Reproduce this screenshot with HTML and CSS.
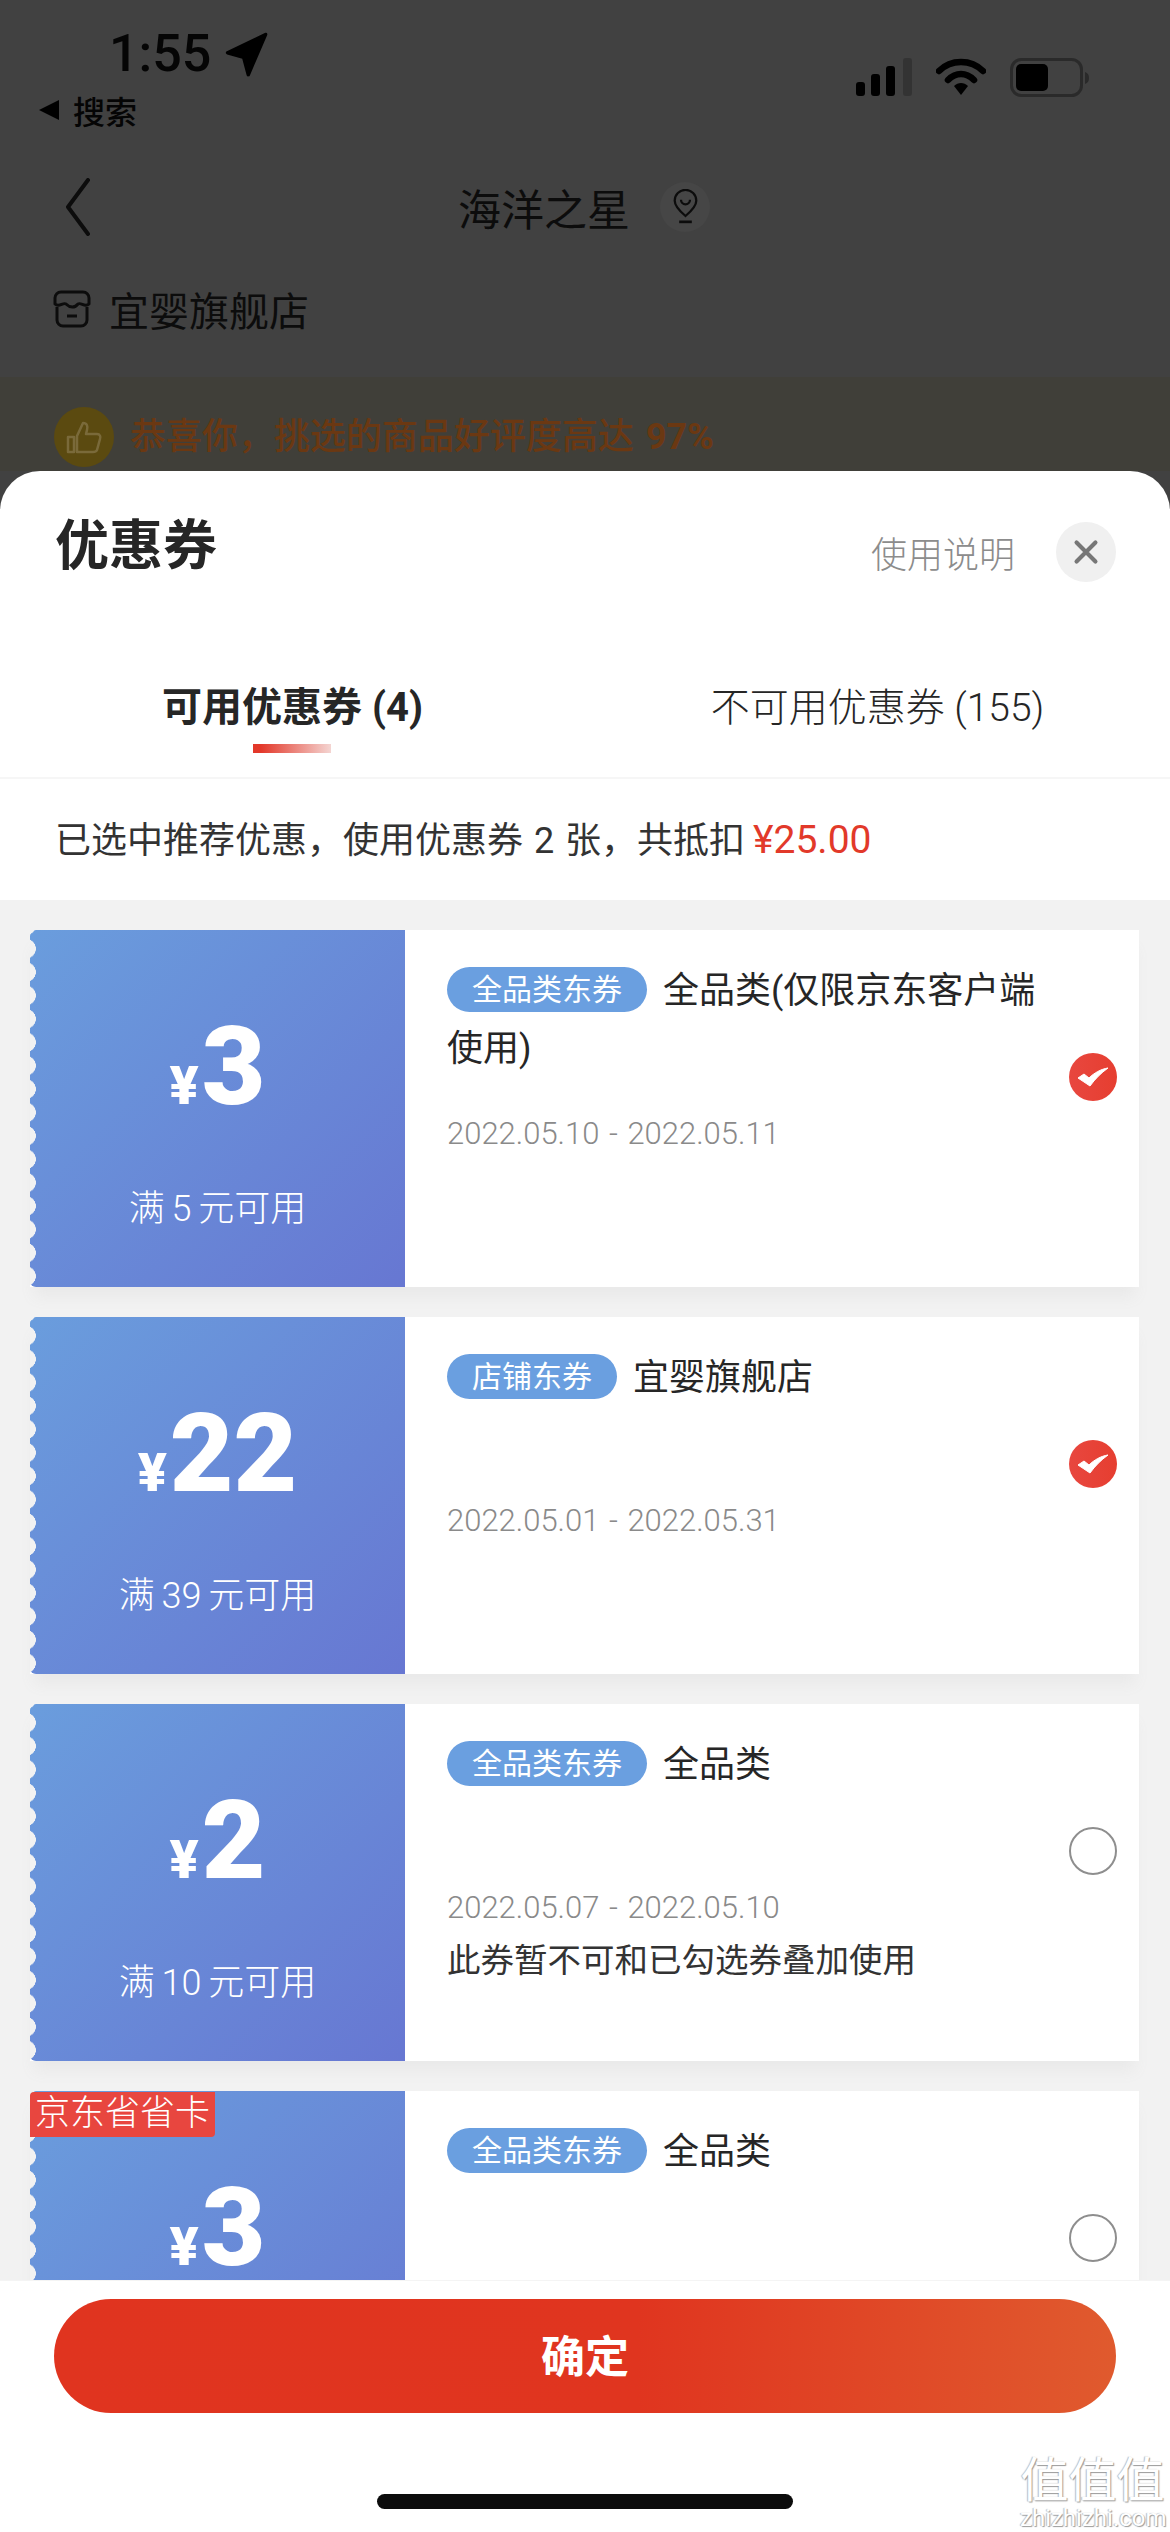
FILE: index.html
```html
<!DOCTYPE html>
<html lang="zh-CN">
<head>
    <meta charset="UTF-8">
    <meta name="viewport" content="width=device-width, initial-scale=1.0">
    <title>优惠券</title>
    <link rel="stylesheet" href="styles.css">
</head>
<body>
<div class="phone">
    <!-- dimmed page behind the sheet -->
    <div class="behind">
        <div class="status">
            <div class="status-left">
                <div class="time-row">
                    <span class="time">1:55</span>
                    <svg class="loc" viewBox="0 0 40 40"><path d="M37 3 L4 19 L18 23 L22 38 Z" fill="#000" stroke="#000" stroke-width="3" stroke-linejoin="round"/></svg>
                </div>
                <div class="back-app">
                    <svg class="back-tri" viewBox="0 0 22 22"><path d="M1 11 L21 1 L21 21 Z" fill="#000"/></svg>
                    <span>搜索</span>
                </div>
            </div>
            <div class="status-right">
                <svg class="signal" viewBox="0 0 58 38">
                    <rect x="0" y="24" width="9" height="14" rx="3" fill="#000"/>
                    <rect x="15" y="16" width="9" height="22" rx="3" fill="#000"/>
                    <rect x="30" y="8" width="9" height="30" rx="3" fill="#000"/>
                    <rect x="47" y="0" width="9" height="38" rx="3" fill="#333"/>
                </svg>
                <svg class="wifi" viewBox="0 0 50 38">
                    <path d="M3 13 C15 1 35 1 47 13" fill="none" stroke="#000" stroke-width="6.5" stroke-linecap="round"/>
                    <path d="M12 22 C20 14 30 14 38 22" fill="none" stroke="#000" stroke-width="6.5" stroke-linecap="round"/>
                    <path d="M18 28 C22 24 28 24 32 28 L25 37 Z" fill="#000"/>
                </svg>
                <svg class="battery" viewBox="0 0 80 40">
                    <rect x="1.5" y="1.5" width="70" height="36" rx="10" fill="none" stroke="#2a2a2a" stroke-width="3"/>
                    <rect x="6" y="6" width="32" height="27" rx="5" fill="#000"/>
                    <path d="M75 14 C78 15 79 17 79 20 C79 23 78 25 75 26 Z" fill="#2a2a2a"/>
                </svg>
            </div>
        </div>

        <div class="nav">
            <svg class="chevron" viewBox="0 0 26 58"><path d="M23 2 L3 29 L23 56" fill="none" stroke="#0c0c0c" stroke-width="4" stroke-linecap="round" stroke-linejoin="round"/></svg>
            <div class="nav-title">
                <span>海洋之星</span>
                <span class="pin-wrap">
                    <svg class="pin" viewBox="0 0 30 40">
                        <path d="M15 30 C8 24 3 19 3 13 A12 12 0 0 1 27 13 C27 19 22 24 15 30 Z" fill="none" stroke="#0c0c0c" stroke-width="2.5"/>
                        <path d="M10 12 A5 5 0 0 0 20 12" fill="none" stroke="#0c0c0c" stroke-width="2.5"/>
                        <rect x="8" y="35" width="14" height="3" fill="#0c0c0c"/>
                    </svg>
                </span>
            </div>
        </div>

        <div class="shop">
            <svg class="shop-icon" viewBox="0 0 38 38">
                <path d="M8 2 H30 A6 6 0 0 1 36 8 V14 C32 18 28 12 25 14 C22 18 17 18 13 14 C10 12 6 18 2 14 V8 A6 6 0 0 1 8 2 Z" fill="none" stroke="#0c0c0c" stroke-width="3" stroke-linejoin="round"/>
                <path d="M4 17 V30 A6 6 0 0 0 10 36 H28 A6 6 0 0 0 34 30 V17" fill="none" stroke="#0c0c0c" stroke-width="3"/>
                <path d="M14 26 H24" stroke="#0c0c0c" stroke-width="3"/>
            </svg>
            <span>宜婴旗舰店</span>
        </div>

        <div class="banner">
            <span class="thumb">
                <svg viewBox="0 0 40 40"><path d="M4 20 H10 V35 H4 Z M13 19 L19 6 C23 6 24 9 23 13 L22 17 H33 C36 17 37 20 36 22 L33 33 C32 35 31 35 29 35 H13 Z" fill="none" stroke="#7a6a3a" stroke-width="2.5" stroke-linejoin="round"/></svg>
            </span>
            <span class="banner-text">恭喜你，挑选的商品好评度高达 <b>97%</b></span>
        </div>
    </div>

    <div class="sheet">
        <div class="sheet-head">
            <h1>优惠券</h1>
            <div class="head-right">
                <span class="help">使用说明</span>
                <span class="close">
                    <svg viewBox="0 0 22 22"><path d="M3 3 L19 19 M19 3 L3 19" stroke="#777" stroke-width="3.5" stroke-linecap="round"/></svg>
                </span>
            </div>
        </div>

        <div class="tabs">
            <div class="tab active">可用优惠券 (4)<i class="tab-line"></i></div>
            <div class="tab">不可用优惠券 (155)</div>
        </div>

        <div class="summary">已选中推荐优惠，使用优惠券 2 张，共抵扣 <span class="red">¥25.00</span></div>

        <div class="list">
            <div class="card">
                <div class="coupon">
                    <div class="amount"><span class="yen">¥</span><span class="num">3</span></div>
                    <div class="cond">满 5 元可用</div>
                </div>
                <div class="info">
                    <div class="title"><span class="tag">全品类东券</span>全品类(仅限京东客户端使用)</div>
                    <div class="date">2022.05.10 - 2022.05.11</div>
                </div>
                <span class="check on"><svg viewBox="0 0 48 48"><path d="M9 25 L15 21 L20 25 C25 20 32 16 39 15 C32 20 26 26 21 33 Z" fill="#fff" stroke="#fff" stroke-width="1" stroke-linejoin="round"/></svg></span>
            </div>

            <div class="card">
                <div class="coupon">
                    <div class="amount"><span class="yen">¥</span><span class="num">22</span></div>
                    <div class="cond">满 39 元可用</div>
                </div>
                <div class="info">
                    <div class="title"><span class="tag">店铺东券</span>宜婴旗舰店</div>
                    <div class="date">2022.05.01 - 2022.05.31</div>
                </div>
                <span class="check on"><svg viewBox="0 0 48 48"><path d="M9 25 L15 21 L20 25 C25 20 32 16 39 15 C32 20 26 26 21 33 Z" fill="#fff" stroke="#fff" stroke-width="1" stroke-linejoin="round"/></svg></span>
            </div>

            <div class="card">
                <div class="coupon">
                    <div class="amount"><span class="yen">¥</span><span class="num">2</span></div>
                    <div class="cond">满 10 元可用</div>
                </div>
                <div class="info">
                    <div class="title"><span class="tag">全品类东券</span>全品类</div>
                    <div class="date">2022.05.07 - 2022.05.10</div>
                    <div class="note">此券暂不可和已勾选券叠加使用</div>
                </div>
                <span class="check"></span>
            </div>

            <!-- last card runs under the footer, only its top part shows -->
            <div class="card">
                <div class="coupon">
                    <span class="ribbon">京东省省卡</span>
                    <div class="amount"><span class="yen">¥</span><span class="num">3</span></div>
                </div>
                <div class="info">
                    <div class="title"><span class="tag">全品类东券</span>全品类</div>
                </div>
                <span class="check"></span>
            </div>
        </div>

        <div class="footer">
            <button class="confirm">确定</button>
            <div class="home-bar"></div>
        </div>
    </div>

    <div class="watermark">
        <div class="wm-big">值值值</div>
        <div class="wm-small">zhizhizhi.com</div>
    </div>
</div>
</body>
</html>
```

FILE: styles.css
```css
* {
    box-sizing: border-box;
}

body {
    margin: 0;
    font-family: Roboto, "Noto Sans CJK SC", sans-serif;
    background-color: #414141;
}

.phone {
    position: relative;
    width: 1170px;
    height: 2532px;
    overflow: hidden;
    background-color: #414141;
}

/* dimmed page */
.behind {
    height: 471px;
    overflow: hidden;
    color: #0c0c0c;
}

.status {
    display: flex;
    justify-content: space-between;
    height: 130px;
}

.status-left {
    padding-left: 38px;
}

.time-row {
    display: flex;
    align-items: center;
    height: 56px;
    margin-top: 26px;
    padding-left: 71px;
}

.time {
    font-size: 52px;
    font-weight: 500;
    color: #050505;
    line-height: 56px;
}

.loc {
    width: 46px;
    height: 46px;
    margin-left: 12px;
}

.back-app {
    display: flex;
    align-items: center;
    gap: 13px;
    height: 40px;
    margin-top: 8px;
    font-size: 32px;
    font-weight: 500;
    color: #050505;
}

.back-tri {
    width: 22px;
    height: 22px;
}

.status-right {
    display: flex;
    align-items: flex-start;
    gap: 22px;
    padding: 58px 80px 0 0;
}

.signal {
    width: 58px;
    height: 38px;
}

.wifi {
    width: 50px;
    height: 38px;
}

.battery {
    width: 80px;
    height: 40px;
    margin-left: 2px;
}

.nav {
    display: flex;
    align-items: center;
    position: relative;
    height: 70px;
    margin-top: 42px;
    padding-left: 65px;
}

.chevron {
    width: 26px;
    height: 58px;
}

.nav-title {
    display: flex;
    align-items: center;
    gap: 30px;
    margin-left: 367px;
    font-size: 43px;
}

.pin-wrap {
    display: flex;
    align-items: center;
    justify-content: center;
    width: 50px;
    height: 50px;
    border-radius: 50%;
    background-color: #464646;
}

.pin {
    width: 27px;
    height: 36px;
}

.shop {
    display: flex;
    align-items: center;
    gap: 18px;
    height: 50px;
    margin-top: 42px;
    padding-left: 53px;
    font-size: 40px;
}

.shop-icon {
    width: 38px;
    height: 38px;
}

.banner {
    display: flex;
    align-items: flex-start;
    gap: 16px;
    height: 94px;
    margin-top: 43px;
    padding: 30px 0 0 54px;
    background-color: #403f39;
}

.thumb {
    display: flex;
    align-items: center;
    justify-content: center;
    width: 60px;
    height: 60px;
    border-radius: 50%;
    background-color: #5b4a10;
}

.thumb svg {
    width: 40px;
    height: 40px;
}

.banner-text {
    font-size: 36px;
    font-weight: 500;
    line-height: 60px;
    color: #6b3812;
    word-spacing: 3px;
}

.banner-text b {
    font-weight: 700;
}

/* coupon sheet */
.sheet {
    height: 2061px;
    background-color: #fff;
    border-radius: 40px 40px 0 0;
    color: #262626;
}

.sheet-head {
    display: flex;
    justify-content: space-between;
    height: 180px;
    padding: 43px 54px 0 55px;
}

.sheet-head h1 {
    margin: 0;
    font-size: 54px;
    font-weight: 700;
    line-height: 66px;
}

.head-right {
    display: flex;
    align-items: center;
    gap: 41px;
    height: 60px;
    margin-top: 8px;
}

.help {
    font-size: 36px;
    font-weight: 300;
    color: #8c8c8c;
}

.close {
    display: flex;
    align-items: center;
    justify-content: center;
    width: 60px;
    height: 60px;
    border-radius: 50%;
    background-color: #f0f0f0;
}

.close svg {
    width: 26px;
    height: 26px;
}

.tabs {
    display: flex;
    position: relative;
    height: 128px;
    border-bottom: 2px solid #f6f6f6;
}

.tab {
    flex: 1;
    position: relative;
    padding-top: 30px;
    font-size: 39px;
    font-weight: 300;
    line-height: 54px;
    text-align: center;
}

.tab.active {
    font-size: 40px;
    font-weight: 700;
}

.tab-line {
    position: absolute;
    left: 253px;
    top: 93px;
    width: 78px;
    height: 9px;
    background: linear-gradient(90deg, #e3382a 10%, #f4d5d2);
}

.summary {
    height: 121px;
    padding-left: 55px;
    font-size: 36px;
    line-height: 122px;
    word-spacing: 2px;
    color: #333;
}

.red {
    margin-left: -3px;
    color: #e2392a;
    font-size: 39px;
}

.list {
    height: 1380px;
    overflow: hidden;
    padding: 30px 31px 0 30px;
    background-color: #f2f2f2;
}

.card {
    display: flex;
    position: relative;
    height: 357px;
    margin-bottom: 30px;
    background-color: #fff;
    box-shadow: 0 14px 14px -4px #e9e9e9;
}

.coupon {
    position: relative;
    width: 375px;
    flex-shrink: 0;
    padding-top: 69px;
    background: linear-gradient(135deg, #6a9ddd, #6777d2);
    color: #fff;
    text-align: center;
    border-radius: 6px 0 0 6px;
}

/* scalloped left edge */
.coupon::before {
    content: "";
    position: absolute;
    left: 0;
    top: 0;
    bottom: 0;
    width: 7px;
    background: radial-gradient(circle 10px at -4px 50%, #f2f2f2 96%, transparent) 0 7px / 7px 23.4px repeat-y;
}

.amount {
    display: flex;
    justify-content: center;
    align-items: baseline;
    height: 130px;
    padding-top: 18px;
    line-height: 100px;
}

.yen {
    font-size: 54px;
    font-weight: 900;
    margin-right: 3px;
}

.num {
    font-size: 110px;
    font-weight: 900;
}

.cond {
    margin-top: 58px;
    font-size: 36px;
    font-weight: 300;
    line-height: 44px;
    word-spacing: -2px;
}

.ribbon {
    position: absolute;
    left: 0;
    top: 1px;
    z-index: 1;
    width: 185px;
    height: 45px;
    background-color: #e8463f;
    border-radius: 4px 0 4px 0;
    color: #fff;
    font-size: 35px;
    font-weight: 300;
    line-height: 44px;
}

.info {
    flex: 1;
    padding: 32px 90px 0 42px;
}

.title {
    height: 116px;
    margin-bottom: 36px;
    font-size: 36px;
    line-height: 58px;
}

.tag {
    display: inline-block;
    height: 45px;
    margin-right: 16px;
    padding: 0 25px;
    border-radius: 23px;
    background-color: #6a9fe0;
    color: #fff;
    font-size: 30px;
    line-height: 45px;
    vertical-align: 3px;
}

.date {
    font-size: 31px;
    font-weight: 300;
    line-height: 40px;
    color: #8a8a8a;
    word-spacing: 2px;
}

.note {
    margin-top: 12px;
    font-size: 33.5px;
    line-height: 42px;
    color: #333;
}

.check {
    position: absolute;
    right: 22px;
    top: 123px;
    width: 48px;
    height: 48px;
    border: 2px solid #8e8e8e;
    border-radius: 50%;
}

.check.on {
    border: none;
    background: linear-gradient(90deg, #e8473f, #e63e30);
}

.check svg {
    display: block;
    width: 48px;
    height: 48px;
}

.footer {
    display: flex;
    flex-direction: column;
    align-items: center;
    height: 252px;
    padding-top: 18px;
    background-color: #fff;
    border-top: 1px solid #f4f4f4;
}

.confirm {
    width: 1062px;
    height: 114px;
    padding-bottom: 6px;
    border: none;
    border-radius: 57px;
    background: linear-gradient(90deg, #e0341f, #e0351f 55%, #e05a2e);
    color: #fff;
    font-family: Roboto, "Noto Sans CJK SC", sans-serif;
    font-size: 44px;
    font-weight: 700;
}

.home-bar {
    width: 416px;
    height: 15px;
    margin-top: 81px;
    border-radius: 8px;
    background-color: #0c0c0c;
}

.watermark {
    position: absolute;
    right: 5px;
    bottom: 3px;
    width: 145px;
    color: #fff;
    text-align: center;
    text-shadow: 1px 1px 1px #999, -1px 0 1px #bbb;
}

.wm-big {
    font-size: 48px;
    font-weight: 400;
    line-height: 52px;
}

.wm-small {
    font-size: 24px;
    line-height: 22px;
}
```
